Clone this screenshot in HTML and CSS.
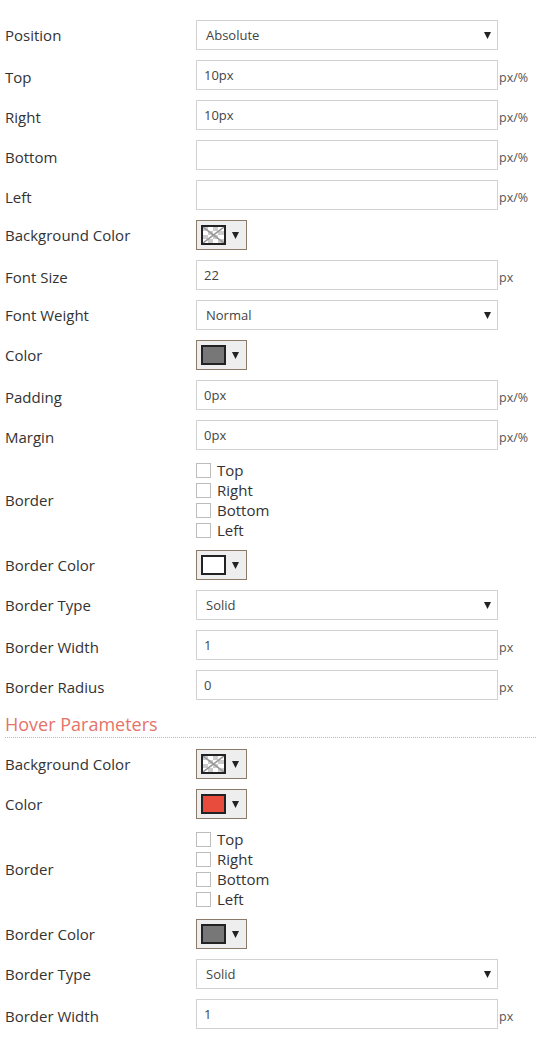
FILE: index.html
```html
<!DOCTYPE html>
<html>
<head>
<meta charset="utf-8">
<link rel="stylesheet" href="styles.css">
</head>
<body>
<div class="form">
  <div class="row"><div class="lbl">Position</div><div class="select"><span>Absolute</span><svg class="caret" viewBox="0 0 7 7"><polygon points="0,0 7,0 3.5,7"/></svg></div></div>
  <div class="row irow"><div class="lbl">Top</div><input class="inp" type="text" value="10px"><span class="unit">px/%</span></div>
  <div class="row irow"><div class="lbl">Right</div><input class="inp" type="text" value="10px"><span class="unit">px/%</span></div>
  <div class="row irow"><div class="lbl">Bottom</div><input class="inp" type="text" value=""><span class="unit">px/%</span></div>
  <div class="row irow"><div class="lbl">Left</div><input class="inp" type="text" value=""><span class="unit">px/%</span></div>
  <div class="row"><div class="lbl">Background Color</div><div class="swbtn"><span class="sw sw-none"><svg viewBox="0 0 21 16" preserveAspectRatio="none"><rect width="21" height="16" fill="#fff"/><rect x="0" y="0" width="5" height="4" fill="#ccc"/><rect x="10" y="0" width="5" height="4" fill="#ccc"/><rect x="5" y="4" width="5" height="4" fill="#ccc"/><rect x="15" y="4" width="6" height="4" fill="#ccc"/><rect x="0" y="8" width="5" height="4" fill="#ccc"/><rect x="10" y="8" width="5" height="4" fill="#ccc"/><rect x="5" y="12" width="5" height="4" fill="#ccc"/><rect x="15" y="12" width="6" height="4" fill="#ccc"/><line x1="0" y1="0" x2="21" y2="16" stroke="#999" stroke-width="1.6"/><line x1="21" y1="0" x2="0" y2="16" stroke="#999" stroke-width="1.6"/></svg></span><svg class="caret" viewBox="0 0 7 7"><polygon points="0,0 7,0 3.5,7"/></svg></div></div>
  <div class="row irow"><div class="lbl">Font Size</div><input class="inp" type="text" value="22"><span class="unit">px</span></div>
  <div class="row"><div class="lbl">Font Weight</div><div class="select"><span>Normal</span><svg class="caret" viewBox="0 0 7 7"><polygon points="0,0 7,0 3.5,7"/></svg></div></div>
  <div class="row"><div class="lbl">Color</div><div class="swbtn"><span class="sw sw-gray"></span><svg class="caret" viewBox="0 0 7 7"><polygon points="0,0 7,0 3.5,7"/></svg></div></div>
  <div class="row irow"><div class="lbl">Padding</div><input class="inp" type="text" value="0px"><span class="unit">px/%</span></div>
  <div class="row irow"><div class="lbl">Margin</div><input class="inp" type="text" value="0px"><span class="unit">px/%</span></div>
  <div class="row"><div class="lbl">Border</div><div class="checks">
    <label class="chk"><span class="box"></span>Top</label>
    <label class="chk"><span class="box"></span>Right</label>
    <label class="chk"><span class="box"></span>Bottom</label>
    <label class="chk"><span class="box"></span>Left</label>
  </div></div>
  <div class="row"><div class="lbl">Border Color</div><div class="swbtn"><span class="sw sw-white"></span><svg class="caret" viewBox="0 0 7 7"><polygon points="0,0 7,0 3.5,7"/></svg></div></div>
  <div class="row"><div class="lbl">Border Type</div><div class="select"><span>Solid</span><svg class="caret" viewBox="0 0 7 7"><polygon points="0,0 7,0 3.5,7"/></svg></div></div>
  <div class="row irow"><div class="lbl">Border Width</div><input class="inp" type="text" value="1"><span class="unit">px</span></div>
  <div class="row irow"><div class="lbl">Border Radius</div><input class="inp" type="text" value="0"><span class="unit">px</span></div>

  <h3 class="section">Hover Parameters</h3>

  <div class="row"><div class="lbl">Background Color</div><div class="swbtn"><span class="sw sw-none"><svg viewBox="0 0 21 16" preserveAspectRatio="none"><rect width="21" height="16" fill="#fff"/><rect x="0" y="0" width="5" height="4" fill="#ccc"/><rect x="10" y="0" width="5" height="4" fill="#ccc"/><rect x="5" y="4" width="5" height="4" fill="#ccc"/><rect x="15" y="4" width="6" height="4" fill="#ccc"/><rect x="0" y="8" width="5" height="4" fill="#ccc"/><rect x="10" y="8" width="5" height="4" fill="#ccc"/><rect x="5" y="12" width="5" height="4" fill="#ccc"/><rect x="15" y="12" width="6" height="4" fill="#ccc"/><line x1="0" y1="0" x2="21" y2="16" stroke="#999" stroke-width="1.6"/><line x1="21" y1="0" x2="0" y2="16" stroke="#999" stroke-width="1.6"/></svg></span><svg class="caret" viewBox="0 0 7 7"><polygon points="0,0 7,0 3.5,7"/></svg></div></div>
  <div class="row"><div class="lbl">Color</div><div class="swbtn"><span class="sw sw-red"></span><svg class="caret" viewBox="0 0 7 7"><polygon points="0,0 7,0 3.5,7"/></svg></div></div>
  <div class="row"><div class="lbl">Border</div><div class="checks">
    <label class="chk"><span class="box"></span>Top</label>
    <label class="chk"><span class="box"></span>Right</label>
    <label class="chk"><span class="box"></span>Bottom</label>
    <label class="chk"><span class="box"></span>Left</label>
  </div></div>
  <div class="row"><div class="lbl">Border Color</div><div class="swbtn"><span class="sw sw-gray"></span><svg class="caret" viewBox="0 0 7 7"><polygon points="0,0 7,0 3.5,7"/></svg></div></div>
  <div class="row"><div class="lbl">Border Type</div><div class="select"><span>Solid</span><svg class="caret" viewBox="0 0 7 7"><polygon points="0,0 7,0 3.5,7"/></svg></div></div>
  <div class="row irow"><div class="lbl">Border Width</div><input class="inp" type="text" value="1"><span class="unit">px</span></div>
</div>
</body>
</html>
```

FILE: styles.css
```css
html, body {
  margin: 0;
  padding: 0;
  background: #fff;
}
body {
  font-family: "Open Sans", "Liberation Sans", sans-serif;
  color: #333;
}
.form {
  padding: 20px 0 0 5px;
}
.row {
  display: flex;
  align-items: center;
  min-height: 30px;
  margin-bottom: 10px;
}
.irow {
  min-height: 34px;
  margin-bottom: 6px;
}
.irow .inp {
  align-self: flex-start;
}
.lbl {
  width: 191px;
  flex: none;
  font-size: 15px;
  color: #333;
}
.inp {
  width: 302px;
  height: 30px;
  box-sizing: border-box;
  margin: 0;
  padding: 0 7px;
  border: 1px solid #d2d2d2;
  font-family: "Open Sans", "Liberation Sans", sans-serif;
  font-size: 13px;
  color: #444;
  background: #fff;
  outline: none;
}
.unit {
  margin-left: 1px;
  font-size: 12.5px;
  color: #555;
}
.select {
  width: 302px;
  height: 30px;
  box-sizing: border-box;
  border: 1px solid #d2d2d2;
  display: flex;
  align-items: center;
  justify-content: space-between;
  padding: 0 6px 0 9px;
  font-size: 13px;
  color: #444;
}
.caret {
  width: 7px;
  height: 7px;
  fill: #222;
  flex: none;
}
.swbtn {
  width: 51px;
  height: 30px;
  box-sizing: border-box;
  border: 1px solid #8c7a68;
  background: #eee;
  padding: 4px 7px 4px 4px;
  display: flex;
  align-items: center;
  justify-content: space-between;
}
.sw {
  width: 25px;
  height: 20px;
  box-sizing: border-box;
  border: 2px solid #222;
  display: block;
}
.sw svg {
  display: block;
  width: 21px;
  height: 16px;
}
.sw-gray { background: #777; }
.sw-white { background: #fff; }
.sw-red { background: #e74c3c; }
.checks {
  display: flex;
  flex-direction: column;
}
.chk {
  display: flex;
  align-items: center;
  height: 20px;
  font-size: 15px;
  color: #333;
}
.box {
  width: 15px;
  height: 15px;
  box-sizing: border-box;
  border: 1px solid #bdbdbd;
  background: #fff;
  margin-right: 6px;
}
.section {
  margin: 6px 0 11px 0;
  height: 28px;
  box-sizing: border-box;
  line-height: 28px;
  font-size: 18px;
  font-weight: normal;
  color: #e57368;
  border-bottom: 1px dotted #bbb;
}
```
